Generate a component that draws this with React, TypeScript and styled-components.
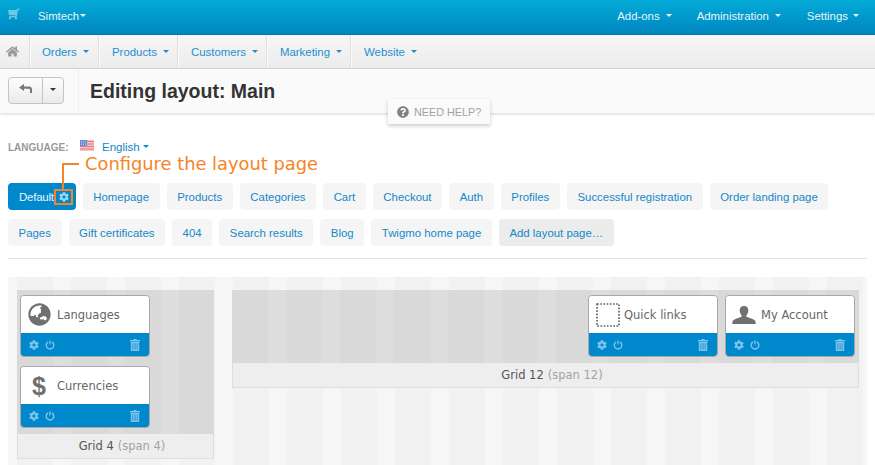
import styled, { createGlobalStyle } from 'styled-components';
import { FaCog, FaGlobeAsia, FaHome, FaQuestionCircle, FaShoppingCart } from 'react-icons/fa';

const GlobalStyle = createGlobalStyle`
  html, body {
    margin: 0;
    padding: 0;
    background: #fff;
    overflow: hidden;
  }
  * { box-sizing: border-box; }
`;

const Page = styled.div`
  position: relative;
  width: 875px;
  height: 465px;
  overflow: hidden;
  font-family: 'Liberation Sans', Arial, sans-serif;
  font-size: 11.4px;
`;

const TopBar = styled.div`
  height: 35px;
  display: flex;
  align-items: center;
  padding: 0 16px 3px 8px;
  background: linear-gradient(180deg, #04abd9 0%, #0086bf 100%);
  border-bottom: 1px solid #0079ad;
  color: #e6f6fb;
`;

const CartIcon = styled(FaShoppingCart)`
  width: 12px;
  height: 12px;
  color: #6cc8e6;
  margin: -4px 18px 0 0;
  transform: scaleX(-1);
`;

const TopSpacer = styled.div`
  flex: 1;
`;

const TopItem = styled.span<{ $gap?: number }>`
  display: inline-flex;
  align-items: center;
  margin-left: ${(p) => p.$gap ?? 0}px;
`;

const Caret = styled.i<{ $gap?: number }>`
  display: inline-block;
  width: 0;
  height: 0;
  margin-left: ${(p) => p.$gap ?? 6}px;
  margin-top: -1px;
  border-top: 3px solid currentColor;
  border-left: 3px solid transparent;
  border-right: 3px solid transparent;
`;

const NavBar = styled.div`
  height: 34px;
  display: flex;
  background: linear-gradient(180deg, #f6f6f6 0%, #ececec 100%);
  border-bottom: 1px solid #d8d8d8;
`;

const NavCell = styled.div<{ $width: number }>`
  width: ${(p) => p.$width}px;
  display: flex;
  align-items: center;
  padding-left: 12px;
  color: #1b8fd0;
  border-right: 1px solid #dfdfdf;
  box-shadow: 1px 0 0 #fafafa;
  margin-right: 1px;

  &:last-child {
    border-right: 0;
    box-shadow: none;
  }
`;

const HomeCell = styled(NavCell)`
  padding-left: 6px;
  color: #999;
  margin-right: 0;
`;

const TitleBar = styled.div`
  height: 44px;
  display: flex;
  align-items: center;
  padding: 0 0 1px 8px;
  background: #fafafa;
  box-shadow: 0 1px 3px rgba(0, 0, 0, 0.18);
`;

const BackGroup = styled.div`
  width: 56px;
  height: 27px;
  display: flex;
  border: 1px solid #c4c4c4;
  border-radius: 4px;
  background: linear-gradient(180deg, #fdfdfd 0%, #eaeaea 100%);
  margin-top: -1px;
`;

const BackButton = styled.div`
  width: 34px;
  display: flex;
  align-items: center;
  justify-content: center;
  color: #777;
  border-right: 1px solid #c4c4c4;
  padding-bottom: 3px;
`;

const BackMenu = styled.div`
  flex: 1;
  display: flex;
  align-items: center;
  justify-content: center;
  color: #333;
`;

const TitleDivider = styled.div`
  width: 1px;
  align-self: stretch;
  background: #f0f0f0;
  margin: 0 11px 0 14px;
`;

const Title = styled.h1`
  margin: 2px 0 0;
  font-size: 19.5px;
  font-weight: 700;
  color: #333;
`;

const HelpTab = styled.div`
  position: absolute;
  left: 388px;
  top: 99px;
  width: 102px;
  height: 25px;
  display: flex;
  align-items: center;
  gap: 5px;
  padding-left: 9px;
  background: #fafafa;
  box-shadow: 0 2px 4px rgba(0, 0, 0, 0.2);
  color: #a3a3a3;
  font-size: 10.8px;
`;

const HelpIcon = styled(FaQuestionCircle)`
  width: 12px;
  height: 12px;
  color: #808080;
`;

const Content = styled.div`
  padding: 0 8px;
`;

const LanguageRow = styled.div`
  height: 70px;
  padding-top: 27px;
  display: flex;
  align-items: flex-start;
`;

const LanguageLabel = styled.span`
  width: 72px;
  margin-top: 2px;
  font-size: 10px;
  font-weight: 700;
  color: #999;
`;

const Flag = styled.svg`
  width: 14px;
  height: 11px;
  margin-right: 8px;
`;

const LanguageLink = styled.span`
  display: inline-flex;
  align-items: center;
  margin-top: 1px;
  font-size: 11.5px;
  color: #0f88c9;
`;

const Tabs = styled.div`
  display: flex;
  flex-wrap: wrap;
  gap: 9px 7px;
  height: 63px;
`;

const Tab = styled.div<{ $active?: boolean; $muted?: boolean }>`
  height: 27px;
  display: flex;
  align-items: center;
  padding: ${(p) => (p.$active ? '0 7px 0 11px' : '0 10.6px')};
  border-radius: 4px;
  letter-spacing: ${(p) => (p.$active ? '-0.2px' : 'normal')};
  background: ${(p) => (p.$active ? '#0088cc' : p.$muted ? '#ececec' : '#f5f5f5')};
  color: ${(p) => (p.$active ? '#e8f6fc' : '#1488c8')};
`;

const TabGear = styled(FaCog)`
  width: 10px;
  height: 10px;
  margin-left: 5px;
  color: #9fd5f0;
`;

const Divider = styled.div`
  height: 1px;
  background: #e3e3e3;
  margin: 12px 0 18px;
`;

const Callout = styled.div`
  position: absolute;
  left: 54px;
  top: 163px;
  width: 280px;
  height: 42px;
  pointer-events: none;
`;

const CalloutText = styled.span`
  position: absolute;
  left: 31px;
  top: -10px;
  font-family: 'DejaVu Sans', sans-serif;
  font-size: 17.85px;
  line-height: 22px;
  color: #f58426;
  white-space: nowrap;
`;

const CalloutStem = styled.i`
  position: absolute;
  left: 8px;
  top: 0;
  width: 17px;
  height: 27px;
  border-left: 2px solid #f58426;
  border-top: 2px solid #f58426;
`;

const CalloutBox = styled.i`
  position: absolute;
  left: 0;
  top: 26px;
  width: 19px;
  height: 16px;
  border: 2px solid #f58426;
`;

const LayoutPanel = styled.div`
  width: 859px;
  height: 188px;
  display: flex;
  align-items: flex-start;
  gap: 18px;
  padding: 13px 8px 0 9px;
  background: repeating-linear-gradient(90deg, #f6f6f6 0 9px, #f2f2f2 9px 45px, #f6f6f6 45px 54px);
`;

const GridColumn = styled.div<{ $width: number }>`
  width: ${(p) => p.$width}px;
  background: repeating-linear-gradient(90deg, #d9d9d9 0 36px, #dddddd 36px 54px);
`;

const BlockArea = styled.div<{ $row?: boolean }>`
  display: flex;
  flex-direction: ${(p) => (p.$row ? 'row' : 'column')};
  justify-content: ${(p) => (p.$row ? 'flex-end' : 'flex-start')};
  gap: ${(p) => (p.$row ? 7 : 9)}px;
  padding: 5px ${(p) => (p.$row ? 4 : 3)}px 6px 3px;
`;

const Block = styled.div`
  width: 130px;
  height: 62px;
  border: 1px solid #a8a8a8;
  border-radius: 4px;
  overflow: hidden;
  display: flex;
  flex-direction: column;
  font-family: 'DejaVu Sans', sans-serif;
`;

const BlockHead = styled.div`
  height: 37px;
  display: flex;
  align-items: center;
  background: #fff;
  color: #666;
  font-size: 11.5px;
`;

const BlockIcon = styled.span<{ $width: number }>`
  width: ${(p) => p.$width}px;
  height: 24px;
  flex: none;
  display: flex;
  align-items: center;
  justify-content: center;
  color: #707070;
`;

const DollarGlyph = styled.span`
  font-family: 'Liberation Sans', Arial, sans-serif;
  font-size: 25px;
  font-weight: 700;
  line-height: 24px;
`;

const BlockFoot = styled.div`
  flex: 1;
  display: flex;
  align-items: center;
  gap: 6px;
  padding: 0 9px 0 8px;
  background: #0088cc;
  color: #7dc4ea;
`;

const FootGap = styled.div`
  flex: 1;
`;

const GridFooter = styled.div`
  height: 25px;
  display: flex;
  align-items: center;
  justify-content: center;
  gap: 4px;
  padding-left: 13px;
  background: #eeeeee;
  border: 1px solid #dedede;
  border-top: 0;
  font-family: 'DejaVu Sans', sans-serif;
  font-size: 11.5px;
  color: #555;
`;

const SpanNote = styled.span`
  color: #a3a3a3;
`;

const PowerIcon = () => (
  <svg width="10" height="10" viewBox="0 0 10 10" fill="none" stroke="currentColor" strokeWidth="1.4">
    <path d="M3 1.900a3.800 3.800 0 1 0 4 0" />
    <path d="M5 .5v4" />
  </svg>
);

const TrashIcon = () => (
  <svg width="10" height="12" viewBox="0 0 10 12" fill="currentColor">
    <path d="M3.500 0h3v1H10v1.400H0V1h3.500zM.8 3h8.400v9H.8zM2.500 4.200v6.600h.7V4.200zm2.200 0v6.600h.7V4.200zm2.100 0v6.600h.7V4.200z" fillRule="evenodd" />
  </svg>
);

const ReplyIcon = () => (
  <svg width="13" height="9" viewBox="0 0 13 9" fill="currentColor">
    <path d="M0 3.500 5 0v2.500h5c1.800 0 3 1 3 3V9h-2V6c0-.7-.4-1.200-1.200-1.200H5V7z" />
  </svg>
);

const PersonIcon = () => (
  <svg width="24" height="18" viewBox="0 0 24 20" fill="currentColor" preserveAspectRatio="none">
    <path d="M12 0c3 0 4.300 2.300 4.300 5 0 2-.8 4-1.800 5.200-.4.8-.2 1.600.6 2 2.400 1.200 6.400 2 7.900 4 .6 1 .7 2 .7 3.800H.3c0-1.800.1-2.800.7-3.800 1.500-2 5.500-2.800 7.900-4 .8-.4 1-1.200.6-2C8.500 9 7.700 7 7.700 5 7.700 2.300 9 0 12 0z" />
  </svg>
);

const DashedSquare = () => (
  <svg width="35" height="24" viewBox="0 0 35 24" fill="none" stroke="#666" strokeWidth="1.700" strokeDasharray="1.700 1.500">
    <rect x="8" y="1" width="22" height="22" />
  </svg>
);

const UsFlag = () => (
  <Flag viewBox="0 0 14 11">
    <rect width="14" height="11" fill="#f3c4c4" />
    <path d="M0 1.500h14M0 4h14M0 6.500h14M0 9h14" stroke="#e67c7c" strokeWidth="1.100" />
    <rect width="7" height="6" fill="#6a88da" />
    <path d="M1 1.500h5M1 3h5M1 4.500h5" stroke="#c8d4f4" strokeWidth=".7" strokeDasharray="1 1" />
  </Flag>
);

const firstRow = ['Homepage', 'Products', 'Categories', 'Cart', 'Checkout', 'Auth', 'Profiles', 'Successful registration', 'Order landing page'];
const secondRow = ['Pages', 'Gift certificates', '404', 'Search results', 'Blog', 'Twigmo home page'];
const navItems: [string, number][] = [['Orders', 69], ['Products', 78], ['Customers', 88], ['Marketing', 83], ['Website', 74]];

function LayoutBlock({ icon, name, iconWidth = 36 }: { icon: React.ReactNode; name: string; iconWidth?: number }) {
  return (
    <Block>
      <BlockHead>
        <BlockIcon $width={iconWidth}>{icon}</BlockIcon>
        {name}
      </BlockHead>
      <BlockFoot>
        <FaCog size={10} />
        <PowerIcon />
        <FootGap />
        <TrashIcon />
      </BlockFoot>
    </Block>
  );
}

export default function App() {
  return (
    <Page>
      <GlobalStyle />
      <TopBar>
        <CartIcon />
        <TopItem>
          Simtech
          <Caret $gap={1} />
        </TopItem>
        <TopSpacer />
        <TopItem>Add-ons<Caret /></TopItem>
        <TopItem $gap={25}>Administration<Caret /></TopItem>
        <TopItem $gap={26}>Settings<Caret $gap={5} /></TopItem>
      </TopBar>
      <NavBar>
        <HomeCell $width={30}><FaHome size={13} /></HomeCell>
        {navItems.map(([label, width]) => (
          <NavCell key={label} $width={width}>
            {label}
            <Caret />
          </NavCell>
        ))}
      </NavBar>
      <TitleBar>
        <BackGroup>
          <BackButton><ReplyIcon /></BackButton>
          <BackMenu><Caret $gap={0} /></BackMenu>
        </BackGroup>
        <TitleDivider />
        <Title>Editing layout: Main</Title>
      </TitleBar>
      <HelpTab>
        <HelpIcon />
        NEED HELP?
      </HelpTab>
      <Content>
        <LanguageRow>
          <LanguageLabel>LANGUAGE:</LanguageLabel>
          <UsFlag />
          <LanguageLink>English<Caret $gap={3} /></LanguageLink>
        </LanguageRow>
        <Tabs>
          <Tab $active>Default<TabGear /></Tab>
          {firstRow.map((name) => <Tab key={name}>{name}</Tab>)}
          {secondRow.map((name) => <Tab key={name}>{name}</Tab>)}
          <Tab $muted>Add layout page…</Tab>
        </Tabs>
        <Divider />
        <LayoutPanel>
          <GridColumn $width={197}>
            <BlockArea>
              <LayoutBlock icon={<FaGlobeAsia size={23} />} name="Languages" />
              <LayoutBlock icon={<DollarGlyph>$</DollarGlyph>} name="Currencies" />
            </BlockArea>
            <GridFooter>Grid 4 <SpanNote>(span 4)</SpanNote></GridFooter>
          </GridColumn>
          <GridColumn $width={627}>
            <BlockArea $row>
              <LayoutBlock icon={<DashedSquare />} name="Quick links" iconWidth={35} />
              <LayoutBlock icon={<PersonIcon />} name="My Account" iconWidth={35} />
            </BlockArea>
            <GridFooter>Grid 12 <SpanNote>(span 12)</SpanNote></GridFooter>
          </GridColumn>
        </LayoutPanel>
      </Content>
      <Callout>
        <CalloutStem />
        <CalloutBox />
        <CalloutText>Configure the layout page</CalloutText>
      </Callout>
    </Page>
  );
}
